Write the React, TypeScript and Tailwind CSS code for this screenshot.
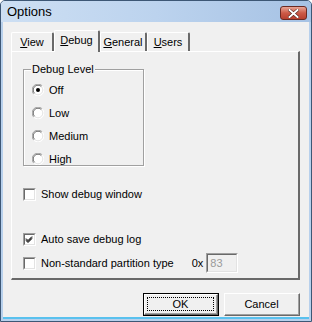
const font = { fontFamily: '"Liberation Sans", Arial, sans-serif' }

function Radio({ checked }: { checked?: boolean }) {
  return (
    <svg width="12" height="12" viewBox="0 0 12 12">
      <circle cx="6" cy="6" r="5.5" fill="#ffffff" />
      <path d="M1.8 10.2 A5.5 5.5 0 0 1 10.2 1.8" fill="none" stroke="#a0a0a0" strokeWidth="1" />
      <path d="M10.2 1.8 A5.5 5.5 0 0 1 1.8 10.2" fill="none" stroke="#ffffff" strokeWidth="1" />
      <path d="M2.6 9.4 A4.5 4.5 0 0 1 9.4 2.6" fill="none" stroke="#696969" strokeWidth="1" />
      <path d="M9.4 2.6 A4.5 4.5 0 0 1 2.6 9.4" fill="none" stroke="#e3e3e3" strokeWidth="1" />
      {checked && <circle cx="6" cy="6" r="2" fill="#000000" />}
    </svg>
  )
}

function Check({ checked }: { checked?: boolean }) {
  return (
    <div className="w-[13px] h-[13px] shrink-0 bg-white border-t border-l border-[#a0a0a0] border-r border-b border-r-white border-b-white">
      <div className="w-full h-full border-t border-l border-[#696969] border-r border-b border-r-[#e3e3e3] border-b-[#e3e3e3]">
        {checked && (
          <svg width="9" height="9" viewBox="0 0 9 9" className="block">
            <path d="M1 3.5 L3 5.5 L7 1.5 M1 4.5 L3 6.5 L7 2.5 M1 5.5 L3 7.5 L7 3.5" fill="none" stroke="#000" strokeWidth="1" />
          </svg>
        )}
      </div>
    </div>
  )
}

function Tab({ label, k, w, active }: { label: string; k: string; w: string; active?: boolean }) {
  const rest = label.slice(1)
  return (
    <div
      className={`${w} ${
        active ? "h-[22px] -mb-px z-10 pt-[3px]" : "h-[19px] pt-[3px]"
      } relative bg-[#f0f0f0] border-t border-l border-white border-r-2 border-r-[#696969] rounded-t-[2px] text-center text-[11px] text-black leading-[13px]`}
    >
      <span className="underline underline-offset-1">{k}</span>
      {rest}
    </div>
  )
}

function Button({ label, focused }: { label: string; focused?: boolean }) {
  return (
    <div
      className={`w-[76px] h-[23px] bg-[#f0f0f0] ${
        focused ? "border border-black" : ""
      }`}
    >
      <div className="w-full h-full border-t border-l border-white border-r border-b border-r-[#696969] border-b-[#696969]">
        <div className="w-full h-full border-r border-b border-r-[#a0a0a0] border-b-[#a0a0a0] p-[2px]">
          <div
            className={`w-full h-full flex items-center justify-center text-[11px] text-black ${
              focused ? "border border-dotted border-black" : ""
            }`}
          >
            {label}
          </div>
        </div>
      </div>
    </div>
  )
}

export default function App() {
  return (
    <div className="w-[312px] h-[322px] relative flex flex-col bg-[#b7d0ec] border border-[#3d5775] rounded-t-[5px] overflow-hidden" style={font}>
      {/* title bar */}
      <div className="h-[21px] shrink-0 flex items-center justify-between pl-[6px] pr-[4px] bg-gradient-to-r from-[#cddff3] via-[#bcd3ee] to-[#a6c2e4]">
        <span className="text-[13px] text-black">Options</span>
        <div className="w-[27px] h-[14px] mt-[3px] rounded-[3px] border border-[#6b2a23] bg-gradient-to-b from-[#e7a597] via-[#cc5a47] to-[#b8402f] flex items-center justify-center">
          <svg width="11" height="9" viewBox="0 0 11 9">
            <path d="M1.5 1 L9.5 8 M9.5 1 L1.5 8" stroke="#4a1a14" strokeWidth="3" strokeLinecap="square" />
            <path d="M1.5 1 L9.5 8 M9.5 1 L1.5 8" stroke="#ffffff" strokeWidth="2" strokeLinecap="square" />
          </svg>
        </div>
      </div>

      {/* client area */}
      <div className="flex-1 mx-[2px] mb-[2px] bg-[#f0f0f0] border-b-2 border-[#59c1ee] flex flex-col">
        <div className="flex-1 flex flex-col pl-[8px] pr-[9px] pt-[7px]">
          {/* tabs */}
          <div className="flex items-end h-[22px]">
            <Tab label="View" k="V" w="w-[43px]" />
            <Tab label="Debug" k="D" w="w-[46px]" active />
            <Tab label="General" k="G" w="w-[47px]" />
            <Tab label="Users" k="U" w="w-[43px]" />
          </div>

          {/* panel */}
          <div className="h-[229px] border-t border-l border-white border-r-2 border-b-2 border-r-[#696969] border-b-[#696969] flex flex-col text-[11px] text-black">
            <div className="ml-[11px] mt-[17px] w-[121px] h-[97px] relative border border-[#a0a0a0] shadow-[inset_1px_1px_0_#ffffff,1px_1px_0_#ffffff]">
              <span className="absolute -top-[8px] left-[7px] px-[1px] bg-[#f0f0f0] leading-[14px]">Debug Level</span>
              <div className="flex flex-col gap-[9px] pt-[13px] pl-[8px]">
                {["Off", "Low", "Medium", "High"].map((l, i) => (
                  <div key={l} className="flex items-center gap-[5px] h-[14px]">
                    <Radio checked={i === 0} />
                    <span className="leading-[14px]">{l}</span>
                  </div>
                ))}
              </div>
            </div>

            <div className="ml-[11px] mt-[21px] flex items-center gap-[5px] h-[14px]">
              <Check />
              <span>Show debug window</span>
            </div>

            <div className="ml-[11px] mt-[31px] flex items-center gap-[5px] h-[14px]">
              <Check checked />
              <span>Auto save debug log</span>
            </div>

            <div className="ml-[11px] mt-[7px] flex items-center h-[20px]">
              <Check />
              <span className="ml-[5px]">Non-standard partition type</span>
              <span className="ml-[18px]">0x</span>
              <div className="ml-[3px] w-[32px] h-[20px] bg-[#f0f0f0] border-t border-l border-[#a0a0a0] border-r border-b border-r-white border-b-white">
                <div className="w-full h-full border-t border-l border-[#696969] border-r border-b border-r-[#e3e3e3] border-b-[#e3e3e3] px-[2px] text-[#9a9a9a] leading-[16px]">
                  83
                </div>
              </div>
            </div>
          </div>

          {/* buttons */}
          <div className="flex justify-end gap-[5px] mt-[13px]">
            <Button label="OK" focused />
            <Button label="Cancel" />
          </div>
        </div>
      </div>
    </div>
  )
}
